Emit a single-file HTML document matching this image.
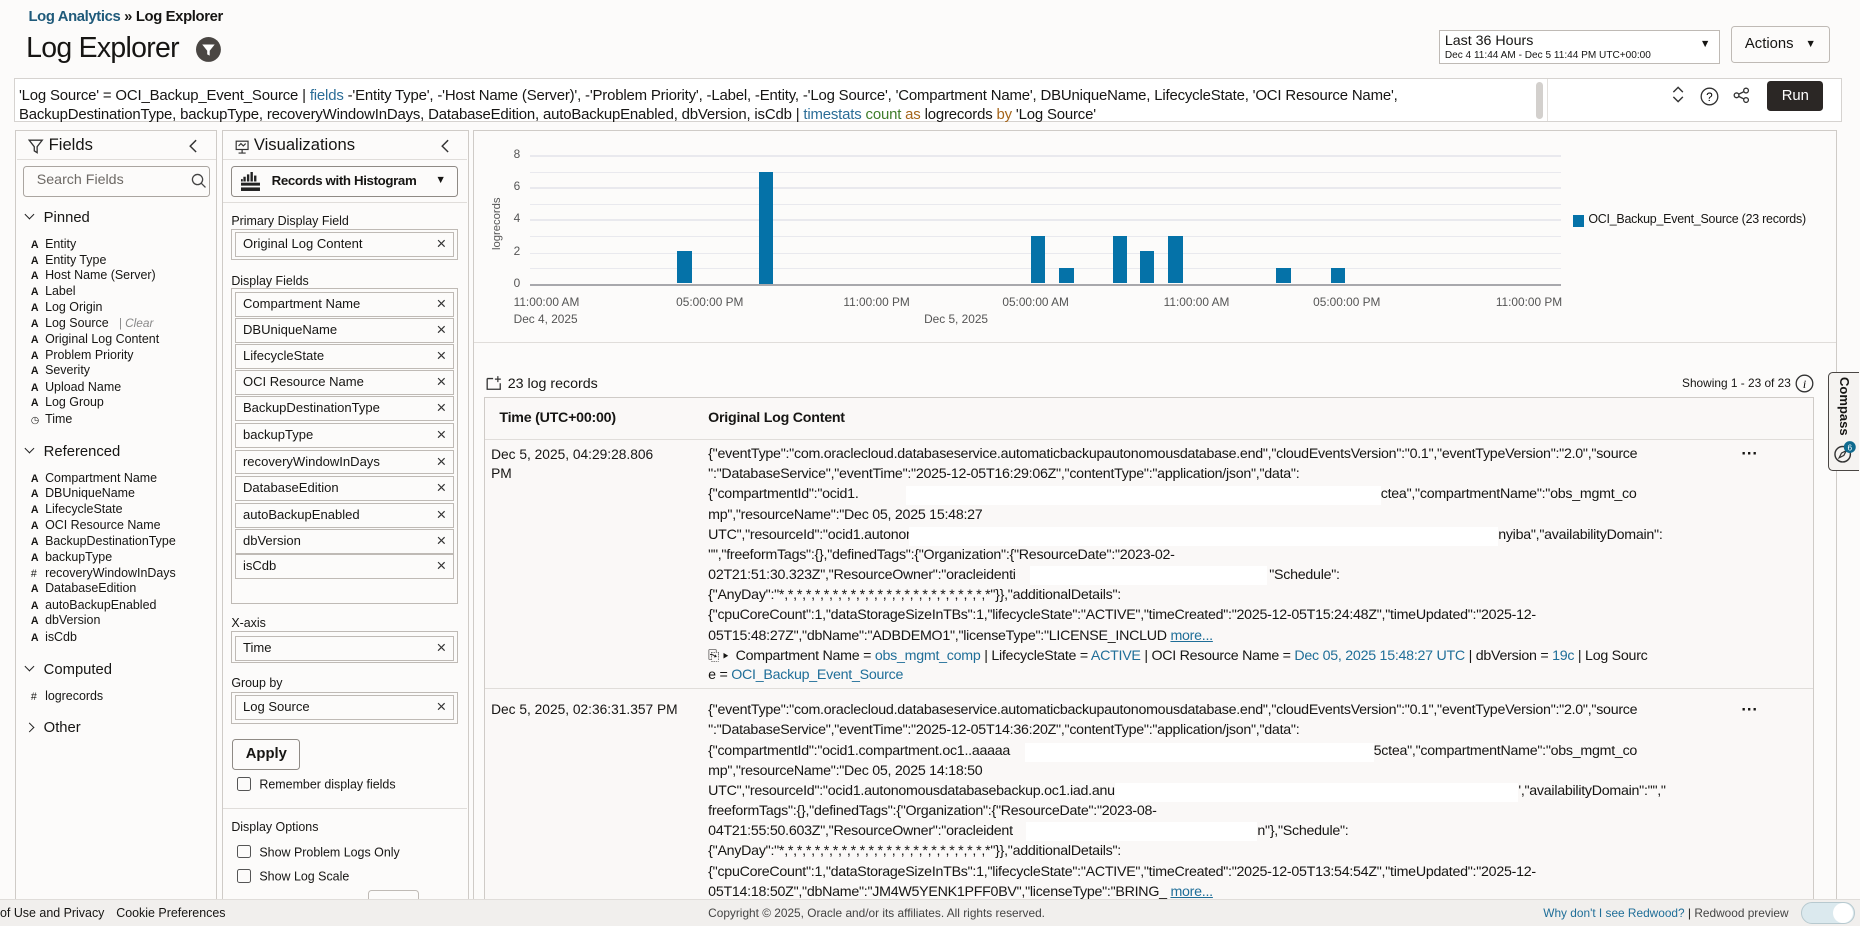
<!DOCTYPE html>
<html><head><meta charset="utf-8"><style>
html,body{margin:0;padding:0;background:#fcfbfa;}
#r{zoom:1.18622;position:relative;width:1568px;height:781px;overflow:hidden;font-family:"Liberation Sans",sans-serif;color:#161513;background:#fcfbfa;}
.a{position:absolute;white-space:nowrap;}
.box{position:absolute;border:1px solid #bfbab5;box-sizing:border-box;}
.chip{position:absolute;left:198px;width:185px;height:21px;border:1px solid #bfbab5;box-sizing:border-box;background:#fcfbfa;font-size:11px;line-height:19px;padding-left:6px;}
.chip:after{content:"\00d7";position:absolute;right:6px;top:0;font-size:14px;line-height:18px;color:#333;}
.fi{position:absolute;left:26px;font-size:10.5px;white-space:nowrap;}
.fi b{display:inline-block;width:12px;font-size:9px;}
.sec{position:absolute;left:20px;font-size:12.5px;}
.sec i{display:inline-block;width:5px;height:5px;border-right:1.5px solid #222;border-bottom:1.5px solid #222;transform:rotate(45deg);margin:0 9px 3px 2px;}
.sec i.rt{transform:rotate(-45deg);margin-bottom:1px;}
.q{font-size:12.6px;letter-spacing:-0.15px;}
.bl{color:#2b6d97}.gr{color:#3f7d2a}.or{color:#a5651a}
.ln{position:absolute;left:597px;font-size:12px;letter-spacing:-0.22px;white-space:nowrap;}
.wb{position:absolute;background:#fff;height:16px;}
.lk{color:#1f6e98}
.cb{display:inline-block;width:10px;height:10px;border:1px solid #555;border-radius:2px;vertical-align:-2px;margin-right:7px;}
.bar{position:absolute;background:#0572a8;width:12px;}
.gl{position:absolute;left:447px;width:869px;height:1px;background:#e9e9ee;}
.xl{position:absolute;font-size:10px;color:#555;white-space:nowrap;}
.yl{position:absolute;left:433px;font-size:10px;color:#555;}
</style></head><body><div id="r">

<!-- header -->
<div class="a" style="left:24px;top:8px;font-size:12.5px;font-weight:bold;letter-spacing:-0.3px;"><span style="color:#1f5a7a">Log Analytics</span> » Log Explorer</div>
<div class="a" style="left:22px;top:27px;font-size:24px;letter-spacing:-0.6px;">Log Explorer</div>
<svg class="a" style="left:165px;top:31px" width="21" height="21" viewBox="0 0 20 20"><circle cx="10" cy="10" r="10" fill="#4a4643"/><path d="M5 6h10l-4 5v4l-2-1v-3z" fill="#fff"/></svg>

<div class="box" style="left:1213px;top:25px;width:237px;height:29px;background:#fff;"></div>
<div class="a" style="left:1218px;top:28px;font-size:12px;">Last 36 Hours</div>
<div class="a" style="left:1218px;top:42px;font-size:8.5px;">Dec 4 11:44 AM - Dec 5 11:44 PM UTC+00:00</div>
<div class="a" style="left:1433px;top:32px;font-size:9px;">▼</div>
<div class="box" style="left:1459px;top:22px;width:84px;height:31px;border-radius:3px;"></div>
<div class="a" style="left:1471px;top:30px;font-size:12.5px;">Actions</div>
<div class="a" style="left:1522px;top:32px;font-size:9px;">▼</div>

<!-- query -->
<div class="box" style="left:12px;top:66px;width:1541px;height:37px;border-color:#d6d3d0;background:#fff;"></div>
<div class="a q" style="left:16px;top:73px;">'Log Source' = OCI_Backup_Event_Source | <span class="bl">fields</span> -'Entity Type', -'Host Name (Server)', -'Problem Priority', -Label, -Entity, -'Log Source', 'Compartment Name', DBUniqueName, LifecycleState, 'OCI Resource Name',</div>
<div class="a q" style="left:16px;top:89px;">BackupDestinationType, backupType, recoveryWindowInDays, DatabaseEdition, autoBackupEnabled, dbVersion, isCdb | <span class="bl">timestats</span> <span class="gr">count</span> <span class="or">as</span> logrecords <span class="or">by</span> 'Log Source'</div>
<div class="a" style="left:1295px;top:69px;width:6px;height:31px;background:#d3d0cd;border-radius:3px;"></div>
<div class="a" style="left:1304px;top:67px;width:1px;height:35px;background:#e3e0dd;"></div>
<svg class="a" style="left:1409px;top:72px" width="12" height="16" fill="none" stroke="#333" stroke-width="1.2"><path d="M2 6l4-4 4 4M2 10l4 4 4-4"/></svg>
<svg class="a" style="left:1433px;top:73px" width="16" height="16"><circle cx="8" cy="8" r="7" fill="none" stroke="#333" stroke-width="1.1"/><text x="8" y="12" font-size="10" text-anchor="middle" font-family="Liberation Sans">?</text></svg>
<svg class="a" style="left:1461px;top:73px" width="14" height="14" fill="none" stroke="#333" stroke-width="1.1"><circle cx="3" cy="7" r="2"/><circle cx="11" cy="3" r="2"/><circle cx="11" cy="11" r="2"/><path d="M5 6l4-2M5 8l4 2"/></svg>
<div class="a" style="left:1490px;top:68px;width:47px;height:26px;background:#2b2725;border-radius:3px;color:#fff;font-size:12.5px;line-height:26px;text-align:center;">Run</div>

<!-- Fields panel -->
<div class="box" style="left:13px;top:110px;width:170px;height:660px;border-color:#cfcbc7;"></div>
<div class="a" style="left:14px;top:134px;width:168px;height:1px;background:#e0ddda;"></div>
<svg class="a" style="left:24px;top:117px" width="13" height="13" fill="none" stroke="#333" stroke-width="1.1"><path d="M1 1h11l-4.3 5.5v5l-2.4-1.5v-3.5z"/></svg>
<div class="a" style="left:41px;top:114px;font-size:14px;">Fields</div>
<svg class="a" style="left:159px;top:117px" width="8" height="12" fill="none" stroke="#333" stroke-width="1.2"><path d="M6 1L1 6l5 5"/></svg>
<div class="box" style="left:19px;top:140px;width:158px;height:26px;border-radius:3px;border-color:#aaa5a0;"></div>
<div class="a" style="left:31px;top:145px;font-size:12px;color:#6d6965;">Search Fields</div>
<svg class="a" style="left:161px;top:146px" width="13" height="13" fill="none" stroke="#444" stroke-width="1.1"><circle cx="5.5" cy="5.5" r="4.3"/><path d="M8.6 8.6l3.6 3.6"/></svg>
<div class="sec" style="top:177px;"><i></i>Pinned</div>
<div class="fi" style="top:200px"><b>A</b>Entity</div>
<div class="fi" style="top:213px"><b>A</b>Entity Type</div>
<div class="fi" style="top:226px"><b>A</b>Host Name (Server)</div>
<div class="fi" style="top:239px"><b>A</b>Label</div>
<div class="fi" style="top:253px"><b>A</b>Log Origin</div>
<div class="fi" style="top:266px"><b>A</b>Log Source <span style="color:#888;font-style:italic;font-size:10px;">&nbsp;&nbsp;| Clear</span></div>
<div class="fi" style="top:280px"><b>A</b>Original Log Content</div>
<div class="fi" style="top:293px"><b>A</b>Problem Priority</div>
<div class="fi" style="top:306px"><b>A</b>Severity</div>
<div class="fi" style="top:320px"><b>A</b>Upload Name</div>
<div class="fi" style="top:333px"><b>A</b>Log Group</div>
<div class="fi" style="top:347px"><b style="font-weight:normal;font-size:8px">◷</b>Time</div>
<div class="sec" style="top:374px;"><i></i>Referenced</div>
<div class="fi" style="top:397px"><b>A</b>Compartment Name</div>
<div class="fi" style="top:410px"><b>A</b>DBUniqueName</div>
<div class="fi" style="top:423px"><b>A</b>LifecycleState</div>
<div class="fi" style="top:437px"><b>A</b>OCI Resource Name</div>
<div class="fi" style="top:450px"><b>A</b>BackupDestinationType</div>
<div class="fi" style="top:464px"><b>A</b>backupType</div>
<div class="fi" style="top:477px"><b style="font-weight:normal">#</b>recoveryWindowInDays</div>
<div class="fi" style="top:490px"><b>A</b>DatabaseEdition</div>
<div class="fi" style="top:504px"><b>A</b>autoBackupEnabled</div>
<div class="fi" style="top:517px"><b>A</b>dbVersion</div>
<div class="fi" style="top:531px"><b>A</b>isCdb</div>
<div class="sec" style="top:558px;"><i></i>Computed</div>
<div class="fi" style="top:581px"><b style="font-weight:normal">#</b>logrecords</div>
<div class="sec" style="top:607px;"><i class="rt"></i>Other</div>

<!-- Visualizations panel -->
<div class="box" style="left:187px;top:110px;width:208px;height:660px;border-color:#cfcbc7;"></div>
<div class="a" style="left:188px;top:134px;width:206px;height:1px;background:#e0ddda;"></div>
<svg class="a" style="left:198px;top:118px" width="12" height="12" fill="none" stroke="#333" stroke-width="1"><rect x="1" y="1" width="10" height="7"/><path d="M3 5l2-2 2 2 2-2M6 8v3M3 11h6"/></svg>
<div class="a" style="left:214px;top:114px;font-size:14px;">Visualizations</div>
<svg class="a" style="left:372px;top:117px" width="8" height="12" fill="none" stroke="#333" stroke-width="1.2"><path d="M6 1L1 6l5 5"/></svg>
<div class="box" style="left:195px;top:140px;width:191px;height:26px;border-radius:3px;border-color:#8f8a85;"></div>
<svg class="a" style="left:203px;top:145px" width="16" height="16" fill="#222"><rect x="0" y="13" width="16" height="3"/><rect x="0" y="9" width="16" height="2.5"/><rect x="2" y="4" width="2" height="4"/><rect x="5" y="2" width="2" height="6"/><rect x="8" y="0" width="2" height="8"/><rect x="11" y="3" width="2" height="5"/><rect x="0" y="6" width="1.5" height="2"/></svg>
<div class="a" style="left:229px;top:146px;font-size:11.2px;font-weight:bold;letter-spacing:-0.3px;">Records with Histogram</div>
<div class="a" style="left:367px;top:147px;font-size:9px;">▼</div>
<div class="a" style="left:188px;top:170px;width:206px;height:1px;background:#e0ddda;"></div>
<div class="a" style="left:195px;top:180px;font-size:10.5px;">Primary Display Field</div>
<div class="box" style="left:195px;top:193px;width:191px;height:26px;"></div>
<div class="chip" style="top:196px">Original Log Content</div>
<div class="a" style="left:195px;top:231px;font-size:10.5px;">Display Fields</div>
<div class="box" style="left:195px;top:243px;width:191px;height:266px;"></div>
<div class="chip" style="top:246px">Compartment Name</div>
<div class="chip" style="top:268px">DBUniqueName</div>
<div class="chip" style="top:290px">LifecycleState</div>
<div class="chip" style="top:312px">OCI Resource Name</div>
<div class="chip" style="top:334px">BackupDestinationType</div>
<div class="chip" style="top:357px">backupType</div>
<div class="chip" style="top:379px">recoveryWindowInDays</div>
<div class="chip" style="top:401px">DatabaseEdition</div>
<div class="chip" style="top:424px">autoBackupEnabled</div>
<div class="chip" style="top:446px">dbVersion</div>
<div class="chip" style="top:467px">isCdb</div>
<div class="a" style="left:195px;top:519px;font-size:10.5px;">X-axis</div>
<div class="box" style="left:195px;top:532px;width:191px;height:27px;"></div>
<div class="chip" style="top:536px">Time</div>
<div class="a" style="left:195px;top:570px;font-size:10.5px;">Group by</div>
<div class="box" style="left:195px;top:583px;width:191px;height:27px;"></div>
<div class="chip" style="top:586px">Log Source</div>
<div class="box" style="left:196px;top:623px;width:57px;height:26px;border-radius:3px;border-color:#8f8a85;font-size:12.5px;font-weight:bold;line-height:24px;text-align:center;">Apply</div>
<div class="a" style="left:200px;top:655px;font-size:10.5px;"><span class="cb"></span>Remember display fields</div>
<div class="a" style="left:188px;top:681px;width:206px;height:1px;background:#e0ddda;"></div>
<div class="a" style="left:195px;top:691px;font-size:10.5px;">Display Options</div>
<div class="a" style="left:200px;top:712px;font-size:10.5px;"><span class="cb"></span>Show Problem Logs Only</div>
<div class="a" style="left:200px;top:733px;font-size:10.5px;"><span class="cb"></span>Show Log Scale</div>
<div class="box" style="left:310px;top:750px;width:43px;height:20px;border-radius:3px;"></div>

<!-- main panel -->
<div class="box" style="left:399px;top:110px;width:1150px;height:660px;border-color:#cfcbc7;"></div>
<div class="a" style="left:400px;top:288px;width:1148px;height:1px;background:#e0ddda;"></div>
<div class="yl" style="top:124px;">8</div>
<div class="yl" style="top:151px;">6</div>
<div class="yl" style="top:178px;">4</div>
<div class="yl" style="top:206px;">2</div>
<div class="yl" style="top:233px;">0</div>
<div class="a" style="left:414px;top:211px;font-size:9.5px;color:#555;transform:rotate(-90deg);transform-origin:0 0;">logrecords</div>
<div class="gl" style="top:131px"></div><div class="gl" style="top:145px"></div><div class="gl" style="top:158px"></div><div class="gl" style="top:172px"></div><div class="gl" style="top:185px"></div><div class="gl" style="top:199px"></div><div class="gl" style="top:213px"></div><div class="gl" style="top:226px"></div>
<div class="gl" style="top:239px;height:2px;background:#a8a8ac"></div>
<div class="bar" style="left:571px;top:212px;height:27px"></div>
<div class="bar" style="left:640px;top:145px;height:94px"></div>
<div class="bar" style="left:869px;top:199px;height:40px"></div>
<div class="bar" style="left:893px;top:226px;height:13px"></div>
<div class="bar" style="left:938px;top:199px;height:40px"></div>
<div class="bar" style="left:961px;top:212px;height:27px"></div>
<div class="bar" style="left:985px;top:199px;height:40px"></div>
<div class="bar" style="left:1076px;top:226px;height:13px"></div>
<div class="bar" style="left:1122px;top:226px;height:13px"></div>
<div class="xl" style="left:433px;top:249px">11:00:00 AM</div>
<div class="xl" style="left:433px;top:263px">Dec 4, 2025</div>
<div class="xl" style="left:570px;top:249px">05:00:00 PM</div>
<div class="xl" style="left:711px;top:249px">11:00:00 PM</div>
<div class="xl" style="left:779px;top:263px">Dec 5, 2025</div>
<div class="xl" style="left:845px;top:249px">05:00:00 AM</div>
<div class="xl" style="left:981px;top:249px">11:00:00 AM</div>
<div class="xl" style="left:1107px;top:249px">05:00:00 PM</div>
<div class="xl" style="left:1261px;top:249px">11:00:00 PM</div>
<div class="a" style="left:1326px;top:181px;width:9px;height:10px;background:#0572a8;"></div>
<div class="a" style="left:1339px;top:179px;font-size:10.5px;letter-spacing:-0.2px;">OCI_Backup_Event_Source (23 records)</div>

<svg class="a" style="left:410px;top:316px" width="14" height="13" fill="none" stroke="#333" stroke-width="1.1"><path d="M1 3v9h11V7M1 3h5"/><path d="M10 1v5M7.5 3.5h5" stroke-width="1"/></svg>
<div class="a" style="left:428px;top:317px;font-size:12px;">23 log records</div>
<div class="a" style="left:1418px;top:317px;font-size:10px;">Showing 1 - 23 of 23</div>
<svg class="a" style="left:1513px;top:315px" width="16" height="16"><circle cx="8" cy="8" r="7" fill="none" stroke="#333" stroke-width="1.1"/><text x="8" y="12" font-size="10" font-style="italic" text-anchor="middle" font-family="Liberation Serif">i</text></svg>

<div class="box" style="left:408px;top:335px;width:1121px;height:440px;border-color:#cfcbc7;background:#faf8f7;"></div>
<div class="a" style="left:421px;top:346px;font-size:12px;font-weight:bold;letter-spacing:-0.2px;">Time (UTC+00:00)</div>
<div class="a" style="left:597px;top:346px;font-size:12px;font-weight:bold;letter-spacing:-0.2px;">Original Log Content</div>
<div class="a" style="left:409px;top:370px;width:1119px;height:1px;background:#e0ddda;"></div>
<div class="a" style="left:409px;top:580px;width:1119px;height:1px;background:#e0ddda;"></div>

<!-- row 1 -->
<div class="a" style="left:414px;top:376px;font-size:11.6px;line-height:16px;">Dec 5, 2025, 04:29:28.806<br>PM</div>
<div class="a" style="left:1468px;top:374px;font-size:14px;font-weight:bold;">···</div>
<div class="ln" style="top:376px">{"eventType":"com.oraclecloud.databaseservice.automaticbackupautonomousdatabase.end","cloudEventsVersion":"0.1","eventTypeVersion":"2.0","source</div>
<div class="ln" style="top:393px">":"DatabaseService","eventTime":"2025-12-05T16:29:06Z","contentType":"application/json","data":</div>
<div class="ln" style="top:410px">{"compartmentId":"ocid1.</div><div class="wb" style="left:764px;top:410px;width:400px"></div><div class="ln" style="left:1164px;top:410px">ctea","compartmentName":"obs_mgmt_co</div>
<div class="ln" style="top:427px">mp","resourceName":"Dec 05, 2025 15:48:27</div>
<div class="ln" style="top:444px">UTC","resourceId":"ocid1.autonomous</div><div class="wb" style="left:766px;top:444px;width:497px"></div><div class="ln" style="left:1263px;top:444px">nyiba","availabilityDomain":</div>
<div class="ln" style="top:461px">"","freeformTags":{},"definedTags":{"Organization":{"ResourceDate":"2023-02-</div>
<div class="ln" style="top:478px">02T21:51:30.323Z","ResourceOwner":"oracleidenti</div><div class="wb" style="left:868px;top:477px;width:200px"></div><div class="ln" style="left:1070px;top:478px">"Schedule":</div>
<div class="ln" style="top:495px">{"AnyDay":"*,*,*,*,*,*,*,*,*,*,*,*,*,*,*,*,*,*,*,*,*,*,*,*"}},"additionalDetails":</div>
<div class="ln" style="top:512px">{"cpuCoreCount":1,"dataStorageSizeInTBs":1,"lifecycleState":"ACTIVE","timeCreated":"2025-12-05T15:24:48Z","timeUpdated":"2025-12-</div>
<div class="ln" style="top:529px">05T15:48:27Z","dbName":"ADBDEMO1","licenseType":"LICENSE_INCLUD <span class="lk" style="text-decoration:underline">more...</span></div>
<div class="ln" style="top:546px">⎘ ▸&nbsp; Compartment Name = <span class="lk">obs_mgmt_comp</span> | LifecycleState = <span class="lk">ACTIVE</span> | OCI Resource Name = <span class="lk">Dec 05, 2025 15:48:27 UTC</span> | dbVersion = <span class="lk">19c</span> | Log Sourc</div>
<div class="ln" style="top:562px">e = <span class="lk">OCI_Backup_Event_Source</span></div>

<!-- row 2 -->
<div class="a" style="left:414px;top:592px;font-size:11.6px;">Dec 5, 2025, 02:36:31.357 PM</div>
<div class="a" style="left:1468px;top:590px;font-size:14px;font-weight:bold;">···</div>
<div class="ln" style="top:592px">{"eventType":"com.oraclecloud.databaseservice.automaticbackupautonomousdatabase.end","cloudEventsVersion":"0.1","eventTypeVersion":"2.0","source</div>
<div class="ln" style="top:609px">":"DatabaseService","eventTime":"2025-12-05T14:36:20Z","contentType":"application/json","data":</div>
<div class="ln" style="top:626px">{"compartmentId":"ocid1.compartment.oc1..aaaaa</div><div class="wb" style="left:864px;top:626px;width:294px"></div><div class="ln" style="left:1158px;top:626px">5ctea","compartmentName":"obs_mgmt_co</div>
<div class="ln" style="top:643px">mp","resourceName":"Dec 05, 2025 14:18:50</div>
<div class="ln" style="top:660px">UTC","resourceId":"ocid1.autonomousdatabasebackup.oc1.iad.anu</div><div class="wb" style="left:940px;top:660px;width:340px"></div><div class="ln" style="left:1280px;top:660px">',"availabilityDomain":"","</div>
<div class="ln" style="top:677px">freeformTags":{},"definedTags":{"Organization":{"ResourceDate":"2023-08-</div>
<div class="ln" style="top:694px">04T21:55:50.603Z","ResourceOwner":"oracleident</div><div class="wb" style="left:865px;top:693px;width:195px"></div><div class="ln" style="left:1060px;top:694px">n"},"Schedule":</div>
<div class="ln" style="top:711px">{"AnyDay":"*,*,*,*,*,*,*,*,*,*,*,*,*,*,*,*,*,*,*,*,*,*,*,*"}},"additionalDetails":</div>
<div class="ln" style="top:728px">{"cpuCoreCount":1,"dataStorageSizeInTBs":1,"lifecycleState":"ACTIVE","timeCreated":"2025-12-05T13:54:54Z","timeUpdated":"2025-12-</div>
<div class="ln" style="top:745px">05T14:18:50Z","dbName":"JM4W5YENK1PFF0BV","licenseType":"BRING_ <span class="lk" style="text-decoration:underline">more...</span></div>

<!-- compass -->
<div class="a" style="left:1541px;top:314px;width:26px;height:83px;border:1.5px solid #4a4643;border-right:none;border-radius:4px 0 0 4px;box-sizing:border-box;background:#f5f3f1;"></div>
<div class="a" style="left:1561px;top:318px;font-size:11px;font-weight:bold;transform:rotate(90deg);transform-origin:0 0;">Compass</div>
<svg class="a" style="left:1544px;top:371px" width="22" height="22"><circle cx="9" cy="12" r="6.5" fill="none" stroke="#333" stroke-width="1.2"/><path d="M6 15l2-4 4-2-2 4z" fill="none" stroke="#333"/><circle cx="15" cy="6" r="5" fill="#0f6a8f"/><text x="15" y="9" font-size="7" fill="#fff" text-anchor="middle" font-family="Liberation Sans">6</text></svg>

<!-- footer -->
<div class="a" style="left:0;top:758px;width:1568px;height:23px;background:#f1efed;border-top:1px solid #e0ddda;"></div>
<div class="a" style="left:0;top:764px;font-size:10.5px;">of Use and Privacy</div>
<div class="a" style="left:98px;top:764px;font-size:10.5px;">Cookie Preferences</div>
<div class="a" style="left:597px;top:764px;font-size:10px;color:#444;">Copyright © 2025, Oracle and/or its affiliates. All rights reserved.</div>
<div class="a" style="left:1301px;top:764px;font-size:10px;"><span class="lk">Why don't I see Redwood?</span> | <span style="color:#444">Redwood preview</span></div>
<div class="a" style="left:1518px;top:760px;width:46px;height:19px;border-radius:10px;background:#dbe9ee;border:1px solid #b7c9cf;box-sizing:border-box;"></div>
<div class="a" style="left:1545px;top:761px;width:17px;height:17px;border-radius:50%;background:#fff;"></div>
</div></body></html>
